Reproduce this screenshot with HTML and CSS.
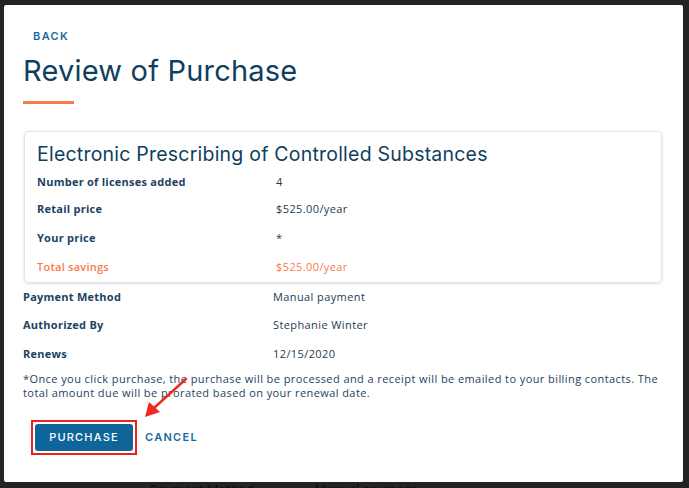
FILE: index.html
```html
<!DOCTYPE html>
<html>
<head>
<meta charset="utf-8">
<link rel="stylesheet" href="styles.css">
</head>
<body>
<div class="modal">
  <a class="back">BACK</a>
  <h1 class="title">Review of Purchase</h1>
  <div class="accent"></div>
  <div class="card">
    <h2 class="card-title">Electronic Prescribing of Controlled Substances</h2>
    <div class="rows">
      <div class="row"><span class="label">Number of licenses added</span><span class="value">4</span></div>
      <div class="row"><span class="label">Retail price</span><span class="value">$525.00/year</span></div>
      <div class="row"><span class="label">Your price</span><span class="value">*</span></div>
      <div class="row savings"><span class="label">Total savings</span><span class="value">$525.00/year</span></div>
    </div>
  </div>
  <div class="rows outer">
    <div class="row"><span class="label">Payment Method</span><span class="value">Manual payment</span></div>
    <div class="row"><span class="label">Authorized By</span><span class="value">Stephanie Winter</span></div>
    <div class="row"><span class="label">Renews</span><span class="value">12/15/2020</span></div>
  </div>
  <p class="note">*Once you click purchase, the purchase will be processed and a receipt will be emailed to your billing contacts. The total amount due will be prorated based on your renewal date.</p>
  <div class="actions">
    <div class="highlight"><button class="btn-primary">PURCHASE</button></div>
    <a class="btn-link">CANCEL</a>
  </div>
  <svg class="arrow" width="60" height="50" viewBox="0 0 60 50">
    <line x1="49" y1="2" x2="17" y2="31" stroke="#ee2a1e" stroke-width="2.4" stroke-linecap="round"/>
    <polygon points="8,40 12,25 23,35" fill="#ee2a1e"/>
  </svg>
</div>
<div class="behind">
  <span class="b1">Payment Method</span><span class="b2">Manual payment</span>
</div>
</body>
</html>
```

FILE: styles.css
```css
html, body {
  margin: 0;
  padding: 0;
  background: #232323;
  height: 488px;
  overflow: hidden;
}
body {
  font-family: "Open Sans", "Lato", sans-serif;
}
.modal {
  position: relative;
  box-sizing: border-box;
  margin: 5px 6px 0 4px;
  height: 477px;
  background: #fff;
  border-radius: 2px;
  padding: 23px 20px 0 19px;
  color: #123e5c;
}
.back {
  display: block;
  margin-left: 10px;
  font-family: "Inter", sans-serif;
  font-weight: 600;
  font-size: 11px;
  letter-spacing: 1.4px;
  color: #1a6a9c;
  line-height: 16px;
}
.title {
  margin: 9px 0 0 0;
  font-family: "Inter", sans-serif;
  font-weight: 400;
  font-size: 29px;
  line-height: 36px;
  color: #0f3f5e;
  letter-spacing: 0.2px;
}
.accent {
  width: 51px;
  height: 3px;
  background: #fb7a4a;
  margin-top: 12px;
}
.card {
  margin: 27px 1px 0 1px;
  border: 1px solid #e2e4e6;
  border-radius: 4px;
  box-shadow: 0 1px 3px rgba(0,0,0,0.12);
  padding: 10px 12px 1px 12px;
}
.card-title {
  margin: 0;
  font-family: "Inter", sans-serif;
  font-weight: 400;
  font-size: 19.5px;
  line-height: 24px;
  color: #0f3f5e;
  letter-spacing: 0.22px;
}
.rows {
  display: flex;
  flex-direction: column;
}
.card .rows {
  margin-top: 2px;
}
.row {
  display: grid;
  grid-template-columns: 239px 1fr;
  height: 29px;
  align-items: center;
  font-size: 11px;
}
.card .row:first-child {
  height: 26px;
}
.label {
  font-weight: 700;
  color: #1c4362;
  letter-spacing: 0.25px;
}
.value {
  color: #1c3c55;
  letter-spacing: 0.4px;
}
.savings .label, .savings .value {
  color: #f77b4c;
  font-weight: 400;
}
.savings .label { font-weight: 600; }
.outer {
  margin-top: -1px;
}
.outer .row {
  grid-template-columns: 250px 1fr;
  height: 28.5px;
}
.note {
  margin: 4px 0 0 0;
  font-size: 11px;
  line-height: 14px;
  color: #1c4362;
  letter-spacing: 0.42px;
}
.actions {
  display: flex;
  align-items: center;
  margin-top: 20px;
  margin-left: 8px;
}
.highlight {
  border: 2px solid #e8221c;
  padding: 2px 2px;
  display: flex;
}
.btn-primary {
  border: none;
  background: #0d6599;
  color: #fff;
  font-family: "Inter", sans-serif;
  font-weight: 500;
  font-size: 11px;
  letter-spacing: 1.2px;
  height: 27px;
  width: 98px;
  border-radius: 3px;
  padding: 0;
}
.btn-link {
  margin-left: 8px;
  font-family: "Inter", sans-serif;
  font-weight: 600;
  font-size: 11px;
  letter-spacing: 1.3px;
  color: #1a6a9c;
}
.arrow {
  position: absolute;
  left: 133px;
  top: 372px;
}
.behind {
  height: 6px;
  overflow: hidden;
  font-size: 13px;
  color: #0d0d0d;
  line-height: 14px;
}
.b1 { margin-left: 150px; }
.b2 { margin-left: 60px; }
```
